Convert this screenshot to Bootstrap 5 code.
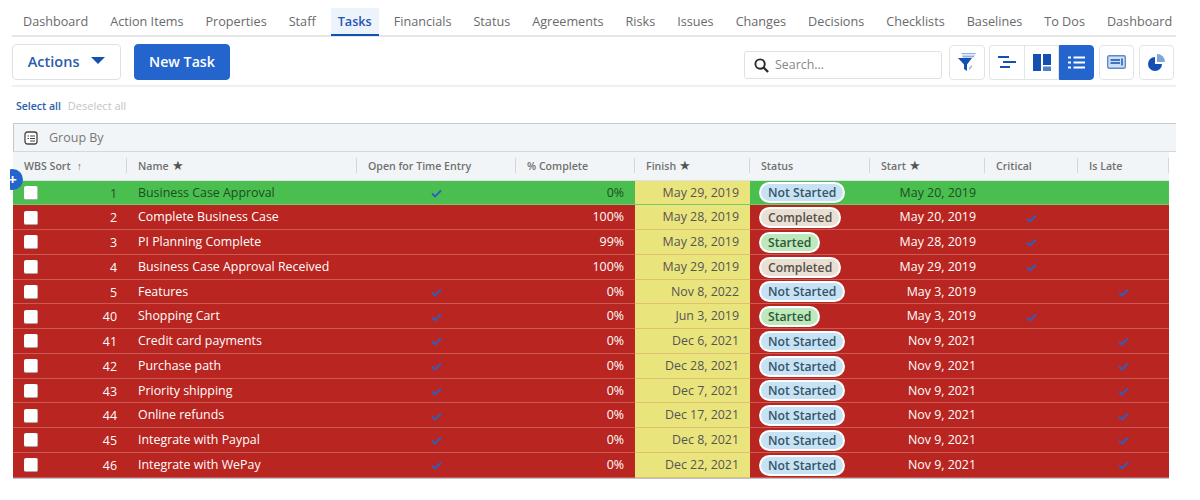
<!DOCTYPE html>
<html lang="en">

<head>
    <meta charset="UTF-8">
    <title>Tasks</title>
    <link href="https://cdn.jsdelivr.net/npm/bootstrap@5.3.0/dist/css/bootstrap.min.css" rel="stylesheet">
    <style>
        body { font-family: "Open Sans", sans-serif; font-size: 12.4px; color: #555; background: #fff; overflow: hidden; }
        .page-wrap { width: 1176px; padding-left: 12px; padding-top: 8px; }
        .top-tabs { height: 29px; border-bottom: 2px solid #e4e6e8; flex-wrap: nowrap; padding-left: 4px; gap: 8px; }
        .top-tabs .nav-link { color: #6a6a6a; padding: 4px 7px 0; height: 28px; font-size: 12.65px; white-space: nowrap; }
        .top-tabs .nav-link.active { color: #1f56b3; font-weight: 600; background: #edf3fb; border-bottom: 2px solid #1450b0; }
        .tool-row { height: 50px; border-bottom: 2px solid #eef0f1; padding-top: 2px; padding-right: 2px; }
        .btn-actions { width: 109px; height: 36px; font-size: 14.5px; font-weight: 600; color: #2c5cab; border: 1px solid #dfe2e5; border-radius: 4px; background: #fff; padding: 0; }
        .btn-new { width: 96px; height: 36px; font-size: 14.2px; font-weight: 600; background: #2365cc; border: 1px solid #2365cc; border-radius: 4px; padding: 0; margin-left: 13px; }
        .caret-shape { display: inline-block; width: 0; height: 0; border-left: 7px solid transparent; border-right: 7px solid transparent; border-top: 7px solid #1450b0; margin-left: 8px; vertical-align: 3px; }
        .search-box { width: 198px; height: 28px; border: 1px solid #dfe2e5; border-radius: 3px; padding-left: 9px; margin-right: 7px; margin-top: 6px; color: #888; font-size: 12.4px; gap: 6px; }
        .icon-btn { width: 35px; height: 35px; border: 1px solid #e2e4e6; border-radius: 4px; background: #fff; padding: 0; }
        .icon-btn svg { display: block; margin: auto; }
        .icon-btn.on { background: #2365cc; border-color: #2365cc; }
        .icon-filter { width: 36px; margin-right: 4px; }
        .icon-gap { margin-right: 5px; }
        .select-row { height: 36px; font-size: 10.5px; padding-left: 4px; padding-top: 11px; }
        .select-on { color: #2c5cab; font-weight: 600; }
        .select-off { color: #c4c4c4; margin-left: 7px; font-size: 11px; }
        .grid-wrap { margin-left: 1px; position: relative; }
        .group-row { height: 29px; background: #f2f5f7; border-top: 1px solid #c4c8ca; border-bottom: 1px solid #d4d8da; border-left: 1px solid #c4c8ca; color: #777; font-size: 12.5px; padding-left: 10px; padding-top: 1px; gap: 11px; }
        .task-grid { width: 1156px; table-layout: fixed; border-collapse: collapse; margin: 0; }
        .task-grid th { height: 28px; background: #f2f5f7; font-weight: 600; font-size: 10.6px; color: #707070; padding: 2px 0 0 11px; vertical-align: middle; position: relative; border-bottom: 1px solid #dde0e2; }
        .task-grid th::after { content: ""; position: absolute; right: 0; top: 6px; height: 15px; border-right: 1px solid #d4d7d9; }
        .head-star { font-size: 12.5px; font-weight: 400; margin-left: 3px; color: #555; line-height: 1; }
        .head-arrow { font-weight: 400; margin-left: 6px; }
        .task-grid td { height: 24.75px; padding: 1px 0 0; font-size: 12.4px; color: #fff; background: #b92520; border-bottom: 1px solid #cb5a55; vertical-align: middle; white-space: nowrap; line-height: 1; }
        .task-grid tr.row-ok td { background: #4abf50; color: #1d4d22; border-bottom-color: #76ca6a; }
        .task-grid td.cell-finish { background: #eae47d; color: #555; text-align: right; padding-right: 11px; border-bottom-color: #e0c070; }
        .task-grid tr.row-ok td.cell-finish { background: #eae47d; color: #555; }
        .task-grid td.cell-box { padding-left: 11px; }
        .row-box { display: block; width: 14px; height: 14px; background: #fff; border-radius: 2px; border-bottom: 1px solid #aaa; border-right: 1px solid #bbb; }
        .cell-wbs { position: relative; }
        .row-num { position: absolute; right: 10px; top: 7px; }
        .task-grid td.cell-name { padding-left: 11px; }
        .task-grid td.cell-pct { text-align: right; padding-right: 11px; }
        .task-grid td.cell-start { text-align: right; padding-right: 9px; }
        .task-grid td.cell-mid { text-align: center; }
        .task-grid td.cell-status { padding-left: 9px; }
        .pill-status { display: inline-block; height: 21px; line-height: 18px; border: 2px solid #fff; border-radius: 11px; padding: 0 7px; font-size: 12.2px; font-weight: 600; }
        .pill-ns { background: #c7e3f3; color: #35536b; }
        .pill-done { background: #eadfd3; color: #55504a; }
        .pill-go { background: #bfe8bd; color: #2c5a35; }
        .grid-end { width: 1156px; border-bottom: 1px solid #b9c4cc; height: 1px; }
        .add-dot { position: absolute; left: -11px; top: 46px; width: 21px; height: 21px; border-radius: 50%; background: #2365cc; color: #fff; font-size: 15px; line-height: 20px; text-align: center; font-weight: 700; z-index: 2; clip-path: inset(0 0 0 8px); }
    </style>
</head>

<body>
    <div class="page-wrap">
        <!-- tabs -->
        <ul class="nav top-tabs">
            <li class="nav-item"><a class="nav-link" href="#">Dashboard</a></li>
            <li class="nav-item"><a class="nav-link" href="#">Action Items</a></li>
            <li class="nav-item"><a class="nav-link" href="#">Properties</a></li>
            <li class="nav-item"><a class="nav-link" href="#">Staff</a></li>
            <li class="nav-item"><a class="nav-link active" href="#">Tasks</a></li>
            <li class="nav-item"><a class="nav-link" href="#">Financials</a></li>
            <li class="nav-item"><a class="nav-link" href="#">Status</a></li>
            <li class="nav-item"><a class="nav-link" href="#">Agreements</a></li>
            <li class="nav-item"><a class="nav-link" href="#">Risks</a></li>
            <li class="nav-item"><a class="nav-link" href="#">Issues</a></li>
            <li class="nav-item"><a class="nav-link" href="#">Changes</a></li>
            <li class="nav-item"><a class="nav-link" href="#">Decisions</a></li>
            <li class="nav-item"><a class="nav-link" href="#">Checklists</a></li>
            <li class="nav-item"><a class="nav-link" href="#">Baselines</a></li>
            <li class="nav-item"><a class="nav-link" href="#">To Dos</a></li>
            <li class="nav-item"><a class="nav-link" href="#">Dashboard</a></li>
        </ul>

        <!-- toolbar -->
        <div class="tool-row d-flex align-items-center">
            <button class="btn btn-actions" type="button">Actions <span class="caret-shape"></span></button>
            <button class="btn btn-primary btn-new me-auto" type="button">New Task</button>
            <div class="search-box d-flex align-items-center">
                <svg width="15" height="15" viewBox="0 0 16 16"><circle cx="6.5" cy="6.5" r="5" fill="none" stroke="#2a2a2a" stroke-width="2"/><path d="M10.2 10.2 15 15" stroke="#2a2a2a" stroke-width="2.4"/></svg>
                <span>Search...</span>
            </div>
            <button class="icon-btn icon-filter" type="button">
                <svg width="18" height="18" viewBox="0 0 18 18"><path d="M0 5h14l-5 6.500V18l-3-2v-4.500z" fill="#1450b0"/><path d="M4 2.500h13l-1.500 2H5zM3 0h15l-.7 1.300H4z" fill="#8fb0e0"/><path d="M11 15l3-3v2l-3 3z" fill="#8fb0e0"/></svg>
            </button>
            <div class="d-flex icon-gap">
                <button class="icon-btn rounded-end-0 border-end-0" type="button">
                    <svg width="18" height="12" viewBox="0 0 18 12"><path d="M0 1h11M5 6h13M2 11h10" stroke="#1450b0" stroke-width="2"/></svg>
                </button>
                <button class="icon-btn rounded-0" type="button">
                    <svg width="18" height="17" viewBox="0 0 18 17"><path d="M0 0h8v17H0zM10 0h8v11h-8z" fill="#1450b0"/><path d="M10 12.500h8V17h-8z" fill="#4f7fcb"/></svg>
                </button>
                <button class="icon-btn on rounded-start-0" type="button">
                    <svg width="17" height="13" viewBox="0 0 17 13"><path d="M0 1.500h3M5.500 1.500H17M0 6.500h3M5.500 6.500H17M0 11.500h3M5.500 11.500H17" stroke="#fff" stroke-width="2.200"/></svg>
                </button>
            </div>
            <button class="icon-btn icon-gap" type="button">
                <svg width="19" height="14" viewBox="0 0 19 14"><rect x=".7" y=".7" width="17.600" height="12.600" rx="1.500" fill="#cfe0f5" stroke="#5a8ad0" stroke-width="1.400"/><path d="M3.500 5h9.500M3.500 8h9.500M15 3.500v7" stroke="#1450b0" stroke-width="1.400"/></svg>
            </button>
            <button class="icon-btn" type="button">
                <svg width="17" height="17" viewBox="0 0 17 17"><path d="M7 3a7 7 0 1 0 7 7H7z" fill="#1450b0"/><path d="M9 0a8 8 0 0 1 8 8H9z" fill="#7fa5dd"/></svg>
            </button>
        </div>

        <div class="select-row"><span class="select-on">Select all</span><span class="select-off">Deselect all</span></div>

        <!-- grid -->
        <div class="grid-wrap">
            <div class="add-dot">+</div>
            <div class="group-row d-flex align-items-center">
                <svg width="14" height="14" viewBox="0 0 14 14"><rect x="1" y="1" width="12" height="12" rx="2.500" fill="#fff" stroke="#444" stroke-width="1.300"/><path d="M3.500 5h1.500M6 5h5M3.500 7.500h1.500M6 7.500h5M6 10h5" stroke="#444"/></svg>
                <span>Group By</span>
            </div>
            <table class="task-grid" id="taskGrid">
                <colgroup>
                    <col style="width:114px"><col style="width:230px"><col style="width:159px"><col style="width:119px"><col style="width:115px"><col style="width:120px"><col style="width:115px"><col style="width:93px"><col style="width:91px">
                </colgroup>
                <thead>
                    <tr>
                        <th>WBS Sort<span class="head-arrow">↑</span></th>
                        <th>Name<span class="head-star">★</span></th>
                        <th>Open for Time Entry</th>
                        <th>% Complete</th>
                        <th>Finish<span class="head-star">★</span></th>
                        <th>Status</th>
                        <th>Start<span class="head-star">★</span></th>
                        <th>Critical</th>
                        <th>Is Late</th>
                    </tr>
                </thead>
                <tbody></tbody>
            </table>
            <div class="grid-end"></div>
        </div>
    </div>

    <script src="https://cdn.jsdelivr.net/npm/bootstrap@5.3.0/dist/js/bootstrap.bundle.min.js"></script>
    <script>
        const tasks = [
            [1, "Business Case Approval", 1, "0%", "May 29, 2019", "n", "May 20, 2019", 0, 0],
            [2, "Complete Business Case", 0, "100%", "May 28, 2019", "d", "May 20, 2019", 1, 0],
            [3, "PI Planning Complete", 0, "99%", "May 28, 2019", "s", "May 28, 2019", 1, 0],
            [4, "Business Case Approval Received", 0, "100%", "May 29, 2019", "d", "May 29, 2019", 1, 0],
            [5, "Features", 1, "0%", "Nov 8, 2022", "n", "May 3, 2019", 0, 1],
            [40, "Shopping Cart", 1, "0%", "Jun 3, 2019", "s", "May 3, 2019", 1, 0],
            [41, "Credit card payments", 1, "0%", "Dec 6, 2021", "n", "Nov 9, 2021", 0, 1],
            [42, "Purchase path", 1, "0%", "Dec 28, 2021", "n", "Nov 9, 2021", 0, 1],
            [43, "Priority shipping", 1, "0%", "Dec 7, 2021", "n", "Nov 9, 2021", 0, 1],
            [44, "Online refunds", 1, "0%", "Dec 17, 2021", "n", "Nov 9, 2021", 0, 1],
            [45, "Integrate with Paypal", 1, "0%", "Dec 8, 2021", "n", "Nov 9, 2021", 0, 1],
            [46, "Integrate with WePay", 1, "0%", "Dec 22, 2021", "n", "Nov 9, 2021", 0, 1]
        ];
        const check = '<svg width="11" height="9" viewBox="0 0 11 9"><path d="M1 4.500l3 3L10 1.500" fill="none" stroke="#2a5fc4" stroke-width="1.800"/></svg>';
        const pills = {
            n: '<span class="pill-status pill-ns">Not Started</span>',
            d: '<span class="pill-status pill-done">Completed</span>',
            s: '<span class="pill-status pill-go">Started</span>'
        };
        document.querySelector("#taskGrid tbody").innerHTML = tasks.map((t, i) => `
            <tr class="${i === 0 ? "row-ok" : ""}">
                <td class="cell-box cell-wbs"><span class="row-box"></span><span class="row-num">${t[0]}</span></td>
                <td class="cell-name">${t[1]}</td>
                <td class="cell-mid">${t[2] ? check : ""}</td>
                <td class="cell-pct">${t[3]}</td>
                <td class="cell-finish">${t[4]}</td>
                <td class="cell-status">${pills[t[5]]}</td>
                <td class="cell-start">${t[6]}</td>
                <td class="cell-mid">${t[7] ? check : ""}</td>
                <td class="cell-mid">${t[8] ? check : ""}</td>
            </tr>`).join("");
    </script>
</body>

</html>
